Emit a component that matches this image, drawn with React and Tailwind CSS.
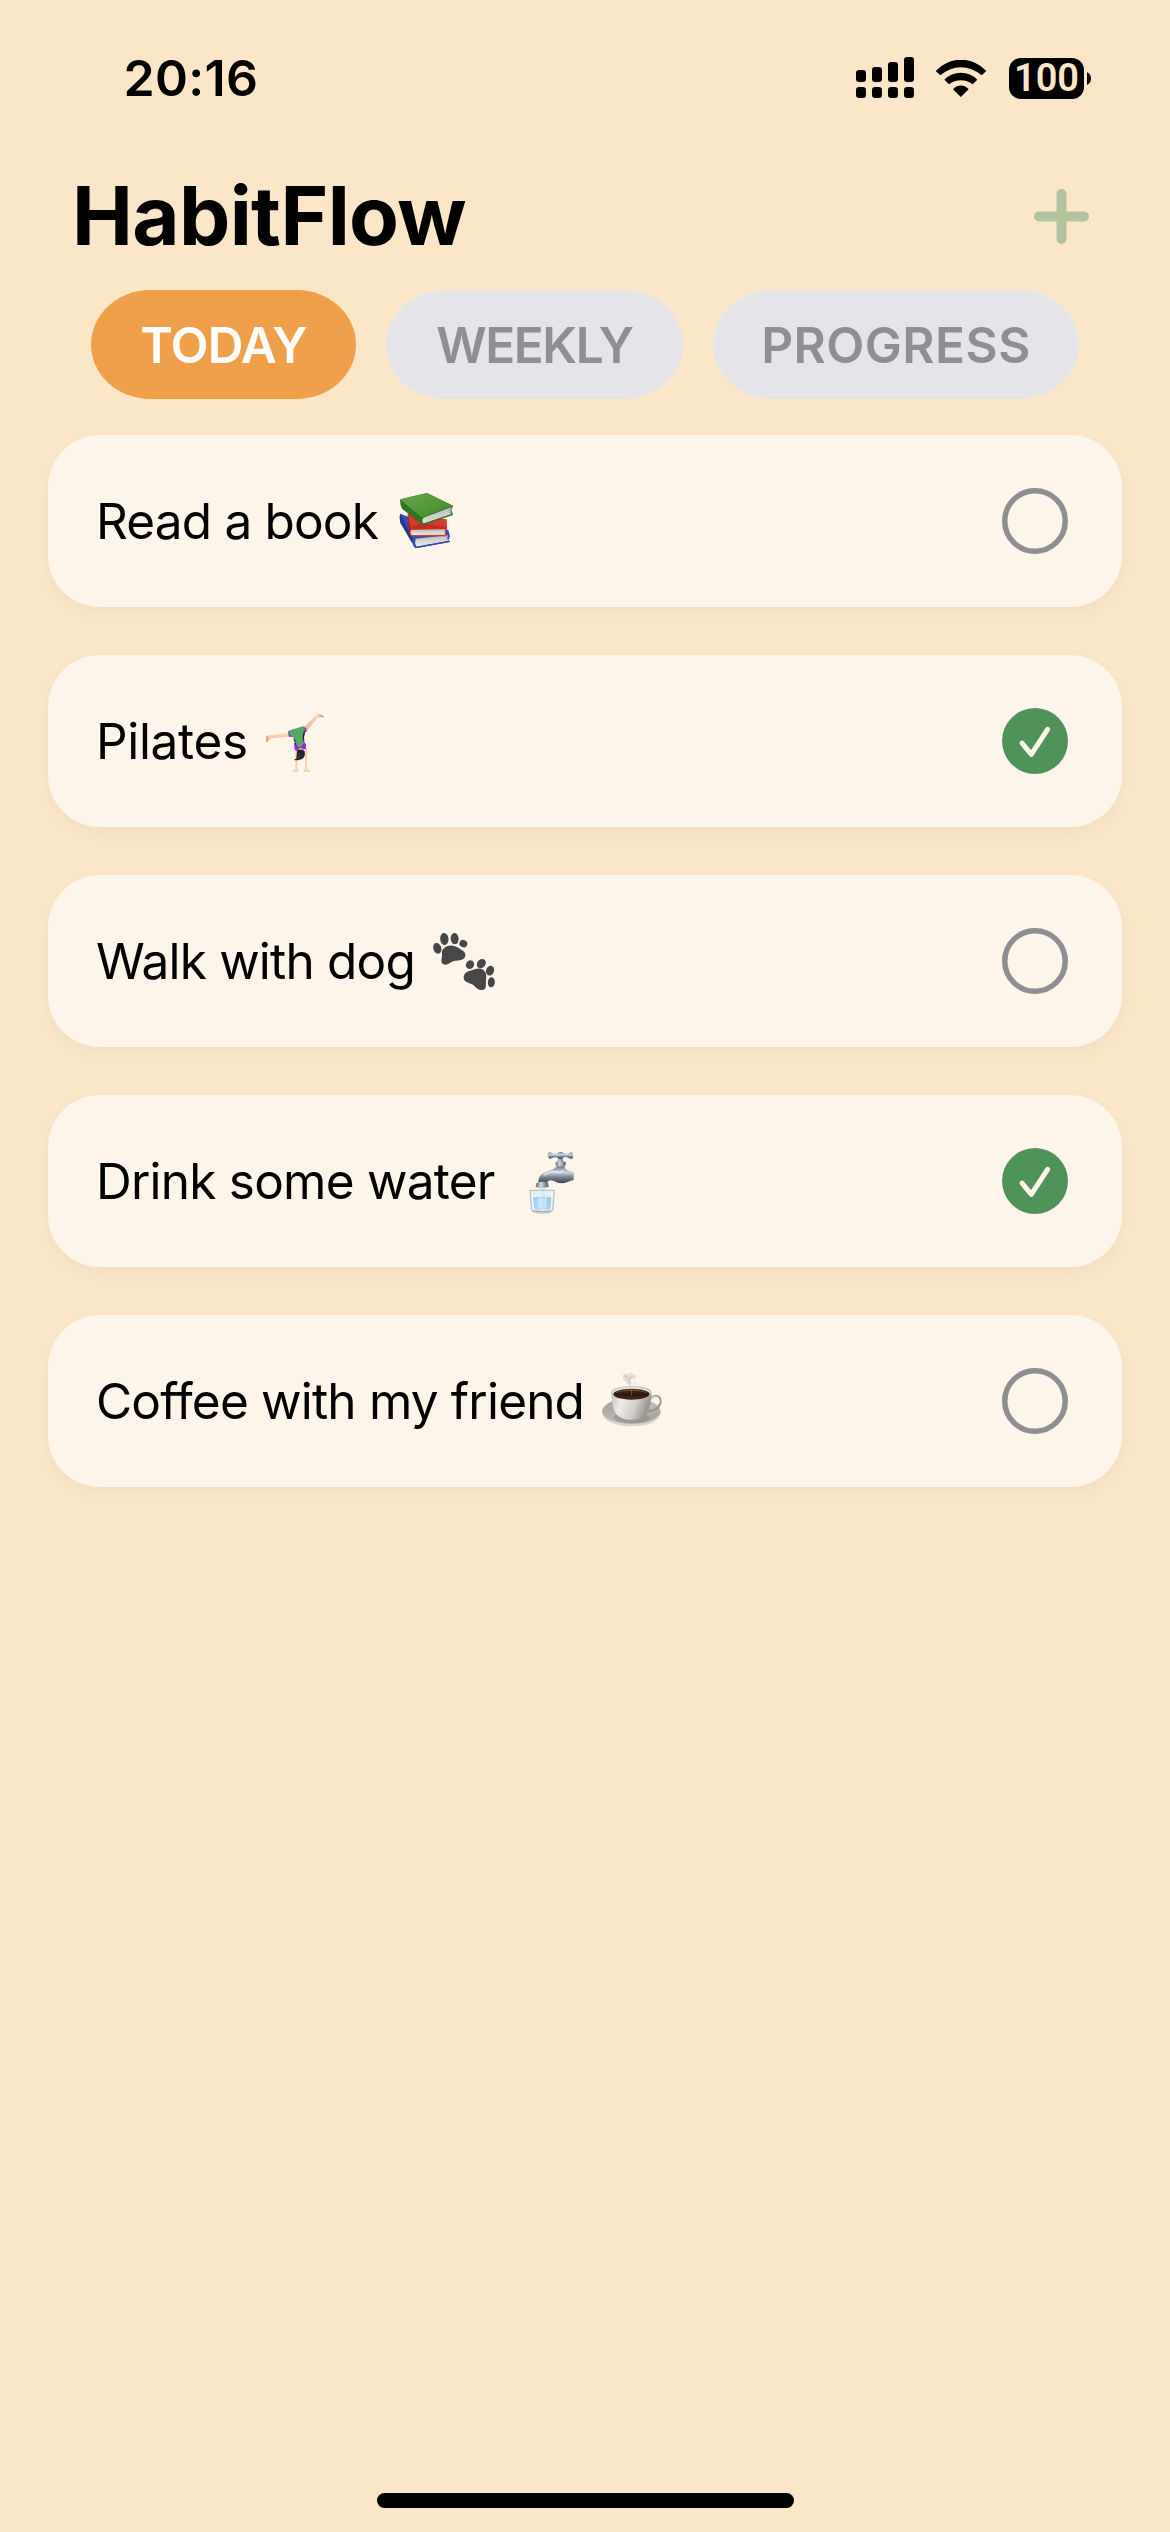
import React from "react";

function Signal() {
  return (
    <svg className="h-[42px] w-[58px]" viewBox="0 0 58 42">
      {[
        [0, 13],
        [16, 10],
        [32, 5],
        [48, 0],
      ].map(([x, y]) => (
        <g key={x}>
          <rect x={x} y={y} width="10" height={25 - y} rx="3.2" />
          <rect x={x} y="30" width="10" height="11" rx="3.2" />
        </g>
      ))}
    </svg>
  );
}

function Wifi() {
  return (
    <svg className="h-[37px] w-[50px]" viewBox="290 57 150 111">
      <path d="M289 90A102 102 0 0 1 441 90L427 103A92 92 0 0 0 303 103Z" />
      <path d="M315 116A69 69 0 0 1 414 116L400 130A57 57 0 0 0 329 130Z" />
      <path d="M341 145A30 30 0 0 1 388 145L364.500 168Z" />
    </svg>
  );
}

function Books() {
  return (
    <svg className="ml-[2px] h-[100px] w-[90px] shrink-0" viewBox="0 3 270 300">
      <defs>
        <linearGradient id="bk-green" x1="0" y1="0" x2="1" y2="1">
          <stop offset="0" stopColor="#69a84a" />
          <stop offset="0.6" stopColor="#4f9636" />
          <stop offset="1" stopColor="#3f8526" />
        </linearGradient>
        <linearGradient id="bk-page" x1="0" y1="0" x2="0" y2="1">
          <stop offset="0" stopColor="#bdbdbd" />
          <stop offset="1" stopColor="#ededed" />
        </linearGradient>
      </defs>
      <path d="M61 131L110 150L205 180L210 198L205 212L210 216L106 235Q98 228 98 220L62 160Q57 143 61 131Z" fill="#3450a8" />
      <path d="M61 131L98 205L98 222L62 160Q57 143 61 131Z" fill="#243a92" />
      <path d="M107 206L204 196Q200 204 204 213L109 230Q103 217 107 206Z" fill="url(#bk-page)" />
      <path d="M106 235L210 216L209 212L108 230Z" fill="#2c48a8" />
      <path d="M83 131L200 148L201 172L197 196L202 199L94 199Q85 193 87 182Z" fill="#d63a2c" />
      <path d="M83 131L92 178Q88 190 94 199Q85 193 87 182Z" fill="#9c1d18" />
      <path d="M92 177L201 176L201 171L125 160L92 172Z" fill="#c22d22" />
      <path d="M93 180L196 178Q192 187 196 194L95 195Q89 188 93 180Z" fill="url(#bk-page)" />
      <path d="M61 88L141 69L219 107L218 112Q211 121 218 130L219 135L129 165Q123 164 120 159L66 116Q59 104 61 88Z" fill="#2f7524" />
      <path d="M61 88L141 69L219 107L133 141Q126 143 121 139Z" fill="url(#bk-green)" />
      <path d="M130 144L215 111Q208 121 214 132L131 160Q124 153 130 144Z" fill="url(#bk-page)" />
      <path d="M133 149L211 119M133 154L212 126" stroke="#b0b0b0" strokeWidth="1.500" />
    </svg>
  );
}

function Cartwheel() {
  return (
    <svg className="ml-[3px] h-[100px] w-[90px] shrink-0" viewBox="0 3 270 300">
      <defs>
        <linearGradient id="cw-skin" x1="0" y1="0" x2="0" y2="1">
          <stop offset="0" stopColor="#fae0c6" />
          <stop offset="1" stopColor="#e3b996" />
        </linearGradient>
      </defs>
      <path d="M112 128L60 135Q50 135 46 139Q49 144 45 155Q49 157 53 150L61 145L115 140Z" fill="url(#cw-skin)" />
      <path d="M45 155Q49 144 46 139L50 138L52 149Q49 157 45 155Z" fill="#d09a78" />
      <path d="M157 112L191 80L200 69Q204 67 209 71L219 79Q221 83 214 82L203 80L167 124Z" fill="url(#cw-skin)" />
      <path d="M203 80L219 82L218 78L206 76Z" fill="#cb9573" />
      <path d="M133 174L141 178L139 236L143 241L140 246L124 245Q122 242 133 238Z" fill="#f4d3b5" />
      <path d="M162 172L169 177L168 236L180 243Q180 246 174 246L158 245L157 241L162 236Z" fill="#f4d3b5" />
      <path d="M111 127L121 124L128 141L114 140Z" fill="#8b1fd0" />
      <path d="M154 109L164 114L168 124L159 128Z" fill="#8b1fd0" />
      <path d="M129 160L136 156L160 157L165 163L164 179L158 176L157 182H137L131 179Z" fill="#9326dc" />
      <path d="M110 124Q122 118 137 115L155 109L162 117L161 130Q155 143 159 158Q151 171 147 172Q138 170 132 158L128 143Q118 140 114 130Z" fill="#56a66b" />
      <path d="M127 143Q129 153 134 163L136 165L132 150ZM160 120L157 130Q152 143 159 159L160 154Q157 142 162 129Z" fill="#1c2522" />
      <ellipse cx="149" cy="177" rx="7" ry="4" fill="#d9a986" />
      <path d="M138 182Q148 176 161 183Q164 195 158 203Q149 211 130 211Q129 208 133 207Q138 205 137 201Q133 201 137 198Z" fill="#252427" />
      <path d="M144 188Q149 197 142 207" stroke="#59565b" strokeWidth="2" fill="none" />
    </svg>
  );
}

function Paws() {
  return (
    <svg className="ml-[5px] h-[90px] w-[90px] shrink-0" viewBox="0 3 270 270" fill="#474747">
      <ellipse cx="52" cy="100" rx="12" ry="16.500" transform="rotate(-18 52 100)" />
      <ellipse cx="73" cy="72" rx="12.500" ry="18" transform="rotate(-5 73 72)" />
      <ellipse cx="104" cy="71" rx="12" ry="17" transform="rotate(-5 104 71)" />
      <ellipse cx="130" cy="86" rx="12" ry="11" transform="rotate(30 130 86)" />
      <path d="M69 103C79 88 101 88 116 99C124 106 138 108 136 123C132 140 110 134 96 140C86 145 78 153 69 147C60 140 67 129 66 119C66 112 65 109 69 103Z" />
      <ellipse cx="150" cy="149" rx="12" ry="13.500" transform="rotate(30 150 149)" />
      <ellipse cx="184" cy="146" rx="12.500" ry="15" transform="rotate(40 184 146)" />
      <ellipse cx="210" cy="167" rx="12" ry="15" transform="rotate(20 210 167)" />
      <ellipse cx="214" cy="202" rx="10.500" ry="15" transform="rotate(5 214 202)" />
      <path d="M151 167C163 164 175 157 187 163C200 170 200 184 198 197C197 210 201 224 186 225C171 227 168 214 156 208C146 203 131 202 131 187C132 174 141 169 151 167Z" />
    </svg>
  );
}

function Faucet() {
  return (
    <svg className="ml-[16px] h-[90px] w-[90px] shrink-0" viewBox="0 3 270 270">
      <defs>
        <linearGradient id="fc-metal" x1="0" y1="0" x2="0" y2="1">
          <stop offset="0" stopColor="#6f7a89" />
          <stop offset="0.350" stopColor="#ccd4de" />
          <stop offset="0.650" stopColor="#778393" />
          <stop offset="1" stopColor="#38424e" />
        </linearGradient>
        <linearGradient id="fc-side" x1="0" y1="0" x2="1" y2="0">
          <stop offset="0" stopColor="#5d6774" />
          <stop offset="0.400" stopColor="#d3d9e2" />
          <stop offset="1" stopColor="#4b5562" />
        </linearGradient>
        <linearGradient id="fc-water" x1="0" y1="0" x2="1" y2="0">
          <stop offset="0" stopColor="#9dcdf3" />
          <stop offset="0.500" stopColor="#c4e4fb" />
          <stop offset="1" stopColor="#8fc4ef" />
        </linearGradient>
      </defs>
      <path d="M142 68H154L156 82H140Z" fill="url(#fc-side)" />
      <path d="M110 56Q113 49 121 53Q135 60 141 53Q149 49 156 53Q164 60 177 53Q184 49 186 58Q188 70 182 72Q174 70 166 66Q158 65 155 70Q148 76 140 69Q134 64 122 70Q111 75 110 56Z" fill="url(#fc-metal)" />
      <path d="M134 81Q148 75 164 81V91Q160 96 148 96Q138 96 134 91Z" fill="url(#fc-side)" />
      <path d="M138 94H160L163 101Q172 109 188 111V135Q177 138 168 142Q148 149 130 139Q112 131 107 144H82Q80 119 104 110Q128 105 138 94Z" fill="url(#fc-metal)" />
      <path d="M98 121Q118 107 139 111Q151 113 157 105" stroke="#f3f6fa" strokeWidth="4" fill="none" opacity="0.650" />
      <path d="M76 144Q92 137 111 143L113 155Q93 162 74 156Z" fill="url(#fc-side)" />
      <path d="M86 158H105V194H86Z" fill="#c8e3f5" opacity="0.800" />
      <path d="M57 166H130L125 227Q120 234 94 234Q68 234 62 227Z" fill="#dceaf2" fillOpacity="0.650" stroke="#adb8be" strokeWidth="3" />
      <path d="M66 188Q94 181 122 188L119 221Q94 228 69 221Z" fill="url(#fc-water)" />
      <path d="M68 190Q94 187 120 190" stroke="#8fbfe6" strokeWidth="2" fill="none" />
      <path d="M63 171L67 224M124 171L119 224" stroke="#ffffff" strokeWidth="3" opacity="0.800" />
      <path d="M88 166L87 220M104 166L103 220" stroke="#eff9ff" strokeWidth="3" opacity="0.700" />
      <path d="M66 227Q94 234 121 227" stroke="#94a1aa" strokeWidth="3" fill="none" />
    </svg>
  );
}

function Coffee() {
  return (
    <svg className="ml-[6px] h-[90px] w-[90px] shrink-0" viewBox="0 -12 270 270">
      <defs>
        <linearGradient id="cf-cup" x1="0" y1="0" x2="1" y2="0.300">
          <stop offset="0" stopColor="#b5b3ad" />
          <stop offset="0.350" stopColor="#ecebe7" />
          <stop offset="0.700" stopColor="#d3d1cb" />
          <stop offset="1" stopColor="#9a978f" />
        </linearGradient>
        <linearGradient id="cf-plate" x1="0" y1="0" x2="1" y2="1">
          <stop offset="0" stopColor="#a09e98" />
          <stop offset="0.550" stopColor="#bdbbb5" />
          <stop offset="1" stopColor="#96938c" />
        </linearGradient>
        <linearGradient id="cf-brew" x1="0" y1="0" x2="0" y2="1">
          <stop offset="0" stopColor="#56351f" />
          <stop offset="0.500" stopColor="#2a160d" />
          <stop offset="1" stopColor="#4b2a18" />
        </linearGradient>
      </defs>
      <path d="M99 45Q108 37 113 44Q122 33 126 42Q141 44 137 55Q124 53 121 63Q128 68 123 77Q111 74 106 62Q96 60 99 45Z" fill="#bcb9b4" opacity="0.400" />
      <path d="M104 47Q114 49 117 59M126 49Q116 58 118 69M130 61Q138 66 132 74" stroke="#9e9b97" strokeWidth="3" fill="none" opacity="0.350" />
      <ellipse cx="124" cy="155" rx="88" ry="41" fill="url(#cf-plate)" />
      <path d="M36 156Q50 190 124 191Q195 190 211 158Q207 197 124 199Q41 196 36 156Z" fill="#d6d4ce" />
      <ellipse cx="124" cy="173" rx="54" ry="16" fill="#827f78" opacity="0.450" />
      <path d="M181 117Q190 106 203 109Q213 113 211 129Q205 151 174 154" fill="none" stroke="#9b978f" strokeWidth="7" />
      <path d="M183 116Q191 108 202 111Q209 115 208 128" fill="none" stroke="#f3f1ed" strokeWidth="3" />
      <path d="M64 97Q66 80 124 78Q183 80 184 97Q184 141 169 164Q154 179 124 179Q92 179 78 161Q65 142 64 97Z" fill="url(#cf-cup)" />
      <ellipse cx="124" cy="98" rx="59" ry="18.500" fill="#e6e4df" stroke="#b3afa8" strokeWidth="2" />
      <path d="M70 102Q73 88 124 86Q177 88 179 102Q174 118 124 119Q73 117 70 102Z" fill="url(#cf-brew)" />
      <path d="M78 98Q95 90 124 91Q156 91 171 98" stroke="#895b39" strokeWidth="2" fill="none" />
      <path d="M123 88Q128 96 123 107" stroke="#b79c87" strokeWidth="3" fill="none" opacity="0.450" />
    </svg>
  );
}

function Check({ done }) {
  return (
    <svg className="ml-auto h-[66px] w-[66px] shrink-0" viewBox="0 0 66 66" fill="none">
      {done ? (
        <>
          <circle cx="33" cy="33" r="33" fill="#509359" />
          <path d="M20 35.200L29.300 46.300L45.600 21.300" stroke="#fef6eb" strokeWidth="5" strokeLinecap="round" strokeLinejoin="round" />
        </>
      ) : (
        <circle cx="33" cy="33" r="30.250" stroke="#8e8e93" strokeWidth="5.500" />
      )}
    </svg>
  );
}

const habits = [
  { name: "Read a book", Icon: Books, tracking: "tracking-[-0.82px]", done: false },
  { name: "Pilates", Icon: Cartwheel, tracking: "tracking-[-0.33px]", done: true },
  { name: "Walk with dog", Icon: Paws, tracking: "tracking-[-0.8px]", done: false },
  { name: "Drink some water", Icon: Faucet, tracking: "tracking-[-0.77px]", done: true },
  { name: "Coffee with my friend", Icon: Coffee, tracking: "tracking-[-0.81px]", done: false },
];

const tabs = [
  { label: "TODAY", style: "w-[265px] bg-[#f0a04b] text-white tracking-[-0.75px]" },
  { label: "WEEKLY", style: "w-[297px] bg-[#e5e4e9] text-[#8e8e93] tracking-[-1.45px]" },
  { label: "PROGRESS", style: "w-[366px] bg-[#e5e4e9] text-[#8e8e93] tracking-[0.45px]" },
];

export default function App() {
  return (
    <div className="flex h-[2532px] w-[1170px] flex-col bg-[#fce6c8] font-[Inter,sans-serif] text-black">
      <div className="flex h-[156px] w-full items-center pl-[123.5px] pr-[79px]">
        <span className="text-[50px] font-semibold leading-none tracking-[0.3px]">20:16</span>
        <div className="ml-auto flex items-center">
          <Signal />
          <div className="ml-[22px]">
            <Wifi />
          </div>
          <div className="ml-[23px] flex h-[41px] w-[75px] items-center justify-center rounded-[12px] bg-black">
            <span className="font-[Roboto,sans-serif] text-[38px] font-semibold leading-none text-[#fce6c8]">100</span>
          </div>
          <svg className="ml-[3px] h-[13px] w-[4px]" viewBox="0 0 4 13">
            <path d="M0 0Q4 2 4 6.500Q4 11 0 13Z" />
          </svg>
        </div>
      </div>

      <header className="flex h-[120px] items-center pl-[72px] pr-[81px]">
        <h1 className="text-[81.500px] font-bold leading-none tracking-[-0.65px]">HabitFlow</h1>
        <svg className="ml-auto h-[55px] w-[55px]" viewBox="0 0 55 55">
          <path d="M27.500 5V50M5 27.500H50" stroke="#b1c39f" strokeWidth="10" strokeLinecap="round" />
        </svg>
      </header>

      <nav className="mt-[14px] flex gap-[30px] pl-[91px]">
        {tabs.map((tab) => (
          <button
            key={tab.label}
            className={`flex h-[109px] items-center justify-center rounded-[59px/54.5px] pt-[2px] text-[49.500px] font-semibold leading-none ${tab.style}`}
          >
            {tab.label}
          </button>
        ))}
      </nav>

      <main className="mt-[36px] flex flex-col gap-[48px] px-[48px]">
        {habits.map(({ name, Icon, tracking, done }) => (
          <div
            key={name}
            className="flex h-[172px] items-center rounded-[52px] bg-[#fef5ea] pl-[48px] pr-[54px] shadow-[0_6px_18px_rgba(0,0,0,0.04)]"
          >
            <span className={`whitespace-nowrap pt-[2px] text-[49.500px] leading-none ${tracking}`}>{name}</span>
            <Icon />
            <Check done={done} />
          </div>
        ))}
      </main>

      <div className="mx-auto mb-[24px] mt-auto h-[15px] w-[417px] rounded-full bg-black" />
    </div>
  );
}
